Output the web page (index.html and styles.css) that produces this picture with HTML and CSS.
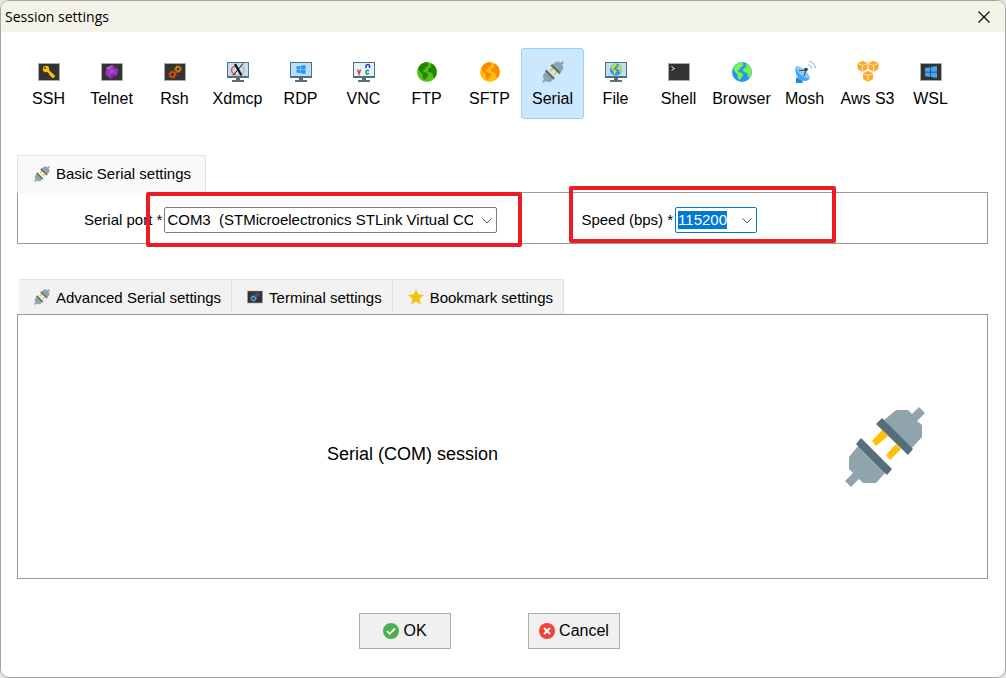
FILE: index.html
```html
<!DOCTYPE html>
<html lang="en">
<head>
    <meta charset="UTF-8">
    <meta name="viewport" content="width=device-width, initial-scale=1.0">
    <title>Session settings</title>
    <link rel="stylesheet" href="styles.css">
</head>
<body>

<!-- Shared icons -->
<svg class="sprite" aria-hidden="true">
    <symbol id="plug" viewBox="0 0 80 80">
        <path fill="#90a4ae" d="M51 3h12l4 4 7-7 6 6-8 8 5 4v12L66 42 38 14zM14 38 4 50v12l4 4-8 8 6 6 8-8 4 4h13l10-11-3-7z"/>
        <path fill="#ffc107" d="m37 23 6 6-12 10-4-5zM51 37l5 5-11 11-4-5z"/>
        <path fill="#546e7a" d="m37 11 31 31-5 6-32-31zM16 31l31 31-5 6-31-31z"/>
    </symbol>
    <symbol id="tile" viewBox="0 0 22 22">
        <path fill="#333" stroke="#adadad" d="M.5 2.500h21v17H.5z"/>
    </symbol>
    <symbol id="monitor" viewBox="0 0 22 22">
        <path fill="#546e7a" d="M0 1h22v16H0zM9 17h4v2h4v2H5v-2h4z"/>
        <path fill="#bbdefb" d="M1 2h20v13H1z"/>
    </symbol>
    <symbol id="land" viewBox="0 0 20 20">
        <path d="M2.500 4 5 1.700 8.500.3l3 .3-1 1.400 1.200 1-1.400 1.500-2 .7.4 1.600-2 1L5.500 9l2 1.300 2.600.6 1.300 2-1.600 2-1.300 2.400-1.600.5-1.300-2.700.2-2.300L4 10.800 2.300 9 1.500 6zM13.500 2.300l2.800.1 2.500 3.400L19.700 9l-.5 4-1.700 3-1.600-1.600-.2-2.600-1.700-1.300-2.300-.6-.9-2L12.300 6l2.300-.9-.8-1.300z"/>
    </symbol>
    <symbol id="windows" viewBox="0 0 12 12">
        <path d="m0 2 5-.8v4.500H0zM5.700 1.100 12 0v5.700H5.700zM0 6.400h5v4.500L0 10zM5.700 6.400H12V12l-6.300-1z"/>
    </symbol>
    <symbol id="gear" viewBox="0 0 10 10">
        <circle cx="5" cy="5" r="2.700" fill="none" stroke="currentColor" stroke-width="1.500"/>
        <circle cx="5" cy="5" r="4" fill="none" stroke="currentColor" stroke-width="1.500" stroke-dasharray="1.300 1.840"/>
    </symbol>
    <symbol id="chevron" viewBox="0 0 10 6">
        <path fill="none" stroke="#555" d="m.5.500 4.500 4.500L9.500.5"/>
    </symbol>
</svg>

<main class="window">
    <header class="titlebar">
        <h1>Session settings</h1>
        <button class="close" type="button" aria-label="Close">
            <svg viewBox="0 0 12 12"><path stroke="#111" stroke-width="1.300" d="m.5.500 11 11m0-11-11 11"/></svg>
        </button>
    </header>

    <nav class="session-types" aria-label="Session type">
        <button type="button">
            <svg viewBox="0 0 22 22"><use href="#tile"/><path fill="none" stroke="#ffc107" stroke-width="2.400" d="m9 9 7.500 7M13 13l-1.200 1.500M15 15l-1.200 1.500"/><circle cx="8" cy="8" r="3.200" fill="#ffc107"/><circle cx="7" cy="7" r="1" fill="#333"/></svg>
            <span>SSH</span>
        </button>
        <button type="button">
            <svg viewBox="0 0 22 22"><use href="#tile"/><path fill="#9c34b4" d="m11.500 4 5.500 3.500-.8 6.500L10 18l-5.500-4L5 7z"/><path fill="#c062d4" d="m11.500 4-3 4.500L5 7z"/><path fill="#b04cc4" d="m8.500 8.500 5.500.5-4.500 5z"/><path fill="#7b1fa2" d="m16.200 14-6.200 4-.5-4zM17 7.500l-3 1.500-2.500-5z"/></svg>
            <span>Telnet</span>
        </button>
        <button type="button">
            <svg viewBox="0 0 22 22"><use href="#tile"/><use href="#gear" x="4" y="9" width="9" height="9" color="#e65100"/><use href="#gear" x="10" y="4" width="8" height="8" color="#fb8c00"/></svg>
            <span>Rsh</span>
        </button>
        <button type="button">
            <svg viewBox="0 0 22 22"><use href="#monitor"/><path fill="none" stroke="#ff5722" stroke-width="1.500" d="M9 5C3 6 3 12 9 14"/><path fill="none" stroke="#ffa07a" stroke-width="1.500" d="M14 5c5 2 4 8-3 9"/><path fill="none" stroke="#111" stroke-width="2.200" d="m8 3 6.500 11.500"/><path fill="none" stroke="#111" d="M16 2.500 6 14.500"/></svg>
            <span>Xdmcp</span>
        </button>
        <button type="button">
            <svg viewBox="0 0 22 22"><use href="#monitor"/><use href="#windows" x="6" y="4" width="10" height="9" fill="#2196f3"/></svg>
            <span>RDP</span>
        </button>
        <button type="button">
            <svg viewBox="0 0 22 22"><use href="#monitor"/><path fill="#e3f2fd" d="M1 2h20v13H1z"/><path fill="none" stroke="#e53935" stroke-width="1.500" d="m4.500 8.500 1.500 4.500 1.500-4.500"/><path fill="none" stroke="#3038d8" stroke-width="1.500" d="M13 7V4.500c.5-1.500 3-1.500 3.500 0V7"/><path fill="none" stroke="#109838" stroke-width="1.500" d="M16 10c-1-1-3-1-3 1.200s2 2.300 3 1"/></svg>
            <span>VNC</span>
        </button>
        <button type="button">
            <svg viewBox="0 0 22 22"><circle cx="11" cy="11" r="10" fill="#4cc40c"/><use href="#land" x="1" y="1" width="20" height="20" fill="#258207"/></svg>
            <span>FTP</span>
        </button>
        <button type="button">
            <svg viewBox="0 0 22 22"><circle cx="11" cy="11" r="10" fill="#ffc107"/><use href="#land" x="1" y="1" width="20" height="20" fill="#ff8508"/></svg>
            <span>SFTP</span>
        </button>
        <button type="button" class="active" aria-pressed="true">
            <svg><use href="#plug"/></svg>
            <span>Serial</span>
        </button>
        <button type="button">
            <svg viewBox="0 0 22 22"><use href="#monitor"/><circle cx="11" cy="8.500" r="6" fill="#2196f3"/><use href="#land" x="5" y="2.500" width="12" height="12" fill="#cddc39"/></svg>
            <span>File</span>
        </button>
        <button type="button">
            <svg viewBox="0 0 22 22"><use href="#tile"/><path fill="none" stroke="#eee" d="m3.500 5.500 3 2-3 2"/></svg>
            <span>Shell</span>
        </button>
        <button type="button">
            <svg viewBox="0 0 22 22"><circle cx="11" cy="11" r="10" fill="#2196f3"/><use href="#land" x="1" y="1" width="20" height="20" fill="#7cf04c"/></svg>
            <span>Browser</span>
        </button>
        <button type="button">
            <svg viewBox="0 0 22 22"><path fill="#1e88e5" d="M2 22v-6l6 3 1 3z"/><path fill="#42a5f5" d="M2 5c-2 6 1 14 8 15 3 0 5-1 6-3z"/><path fill="#90caf9" d="M2 5c4-1 14 7 14 12-4 2-14-5-14-12z"/><path fill="none" stroke="#37474f" d="M5 9.500 12 9l-2 6"/><circle cx="12" cy="8.500" r="1.800" fill="#283593"/><path fill="none" stroke="#64b5f6" d="M14 4c2 0 3 1 3.500 3.500M15 .5c4 .5 6 3 6.500 6.500"/></svg>
            <span>Mosh</span>
        </button>
        <button type="button">
            <svg viewBox="0 0 22 22"><path fill="#ffa726" d="m5.500 0 5 2v6l-5 3-5-3V2zM16.500 0l5 2v6l-5 3-5-3V2zM11 10l5 2v6l-5 3-5-3v-6z"/><path fill="none" stroke="#fff3e0" stroke-width=".8" d="m.5 2.500 5 2 5-2M5.500 4.500V11M11.500 2.500l5 2 5-2M16.500 4.500V11M6 12.500l5 2 5-2M11 14.500V21"/></svg>
            <span>Aws S3</span>
        </button>
        <button type="button">
            <svg viewBox="0 0 22 22"><use href="#tile"/><use href="#windows" x="5" y="5" width="12" height="12" fill="#42a5f5"/></svg>
            <span>WSL</span>
        </button>
    </nav>

    <section class="basic">
        <div class="tabs">
            <button type="button" class="tab selected"><svg><use href="#plug"/></svg>Basic Serial settings</button>
        </div>
        <form class="pane fields">
            <div class="field port">
                <label for="port">Serial port *</label>
                <span class="combo">
                    <select id="port">
                        <option>COM3&nbsp; (STMicroelectronics STLink Virtual COM Port (COM3))</option>
                    </select>
                    <svg><use href="#chevron"/></svg>
                </span>
                <span class="highlight"></span>
            </div>
            <div class="field speed">
                <label for="speed">Speed (bps) *</label>
                <span class="combo">
                    <select id="speed">
                        <option>115200</option>
                    </select>
                    <svg><use href="#chevron"/></svg>
                </span>
                <span class="highlight"></span>
            </div>
        </form>
    </section>

    <section class="advanced">
        <div class="tabs">
            <button type="button" class="tab"><svg><use href="#plug"/></svg>Advanced Serial settings</button>
            <button type="button" class="tab">
                <svg viewBox="0 0 16 16"><path fill="#333" stroke="#aaa" stroke-width=".5" d="M.5 2h15v12H.5z"/><use href="#gear" x="3" y="6" width="7" height="7" color="#64b5f6"/><use href="#gear" x="8" y="3" width="5" height="5" color="#5c6bc0"/></svg>Terminal settings
            </button>
            <button type="button" class="tab">
                <svg viewBox="0 0 16 16"><path fill="#f4c20d" d="m8 0 2.300 5.400 5.700.5-4.300 3.800 1.300 5.800-5-3-5 3 1.300-5.800L0 5.900l5.700-.5z"/></svg>Bookmark settings
            </button>
        </div>
        <div class="pane summary">
            <p>Serial (COM) session</p>
            <svg><use href="#plug"/></svg>
        </div>
    </section>

    <footer class="actions">
        <button type="button">
            <svg viewBox="0 0 16 16"><circle cx="8" cy="8" r="8" fill="#4caf50"/><path fill="none" stroke="#fff" stroke-width="1.800" d="m4 8.200 2.700 2.600L12 5.500"/></svg>OK
        </button>
        <button type="button">
            <svg viewBox="0 0 16 16"><circle cx="8" cy="8" r="8" fill="#f44336"/><path fill="none" stroke="#fff" stroke-width="2" d="m5 5 6 6m0-6-6 6"/></svg>Cancel
        </button>
    </footer>
</main>

</body>
</html>
```
FILE: styles.css
```css
* {
    box-sizing: border-box;
}

body {
    font-family: "Liberation Sans", Arial, sans-serif;
    font-size: 15px;
    color: #000;
    background-color: #e4e4e8;
    margin: 0;
}

button, select {
    font: inherit;
    color: inherit;
}

.sprite {
    display: none;
}

.window {
    min-height: 100vh;
    background-color: #fff;
    border: 1px solid #a6a6a6;
    border-radius: 9px;
    overflow: hidden;
}

.titlebar {
    display: flex;
    align-items: center;
    justify-content: space-between;
    height: 31px;
    padding: 0 8px 0 4px;
    background-color: #f3f3e7;
}

.titlebar h1 {
    margin: 0;
    font-family: "Open Sans", "Noto Sans", sans-serif;
    font-size: 14px;
    font-weight: normal;
}

.close {
    display: flex;
    padding: 7px;
    background: none;
    border: none;
}

.close svg {
    width: 12px;
    height: 12px;
}

/* Session type toolbar */
.session-types {
    display: flex;
    padding: 16px 16px 0;
}

.session-types button {
    display: flex;
    flex-direction: column;
    align-items: center;
    gap: 6px;
    width: 63px;
    padding: 12px 0 9px;
    font-size: 16px;
    line-height: 20px;
    white-space: nowrap;
    background: none;
    border: 1px solid transparent;
    border-radius: 3px;
}

.session-types button.active {
    background-color: #cce8ff;
    border-color: #99d1ff;
}

.session-types svg {
    width: 22px;
    height: 22px;
}

/* Tabs and panes */
.basic, .advanced {
    padding: 0 17px 0 16px;
}

.basic {
    margin-top: 36px;
}

.advanced {
    margin-top: 35px;
}

.tabs {
    display: flex;
}

.tab {
    display: flex;
    align-items: center;
    gap: 6px;
    height: 35px;
    padding: 0 10px 0 15px;
    background-color: #f2f2f2;
    border: 1px solid #e2e2e2;
    border-width: 1px 1px 0 0;
}

.tab svg {
    width: 16px;
    height: 16px;
}

.tab.selected {
    position: relative;
    height: 38px;
    margin-bottom: -1px;
    padding: 0 14px 2px 16px;
    background-color: #f9f9f9;
    border-width: 1px 1px 0 1px;
}

.advanced .tabs {
    padding-left: 2px;
}

.pane {
    border: 1px solid #999;
}

.fields {
    display: flex;
    gap: 84px;
    padding: 14px 66px 10px;
}

.field {
    position: relative;
    display: flex;
    align-items: center;
    gap: 2px;
}

.field label {
    padding-bottom: 2px;
}

.combo {
    position: relative;
    display: flex;
}

.combo svg {
    position: absolute;
    top: 11px;
    right: 5px;
    width: 10px;
    height: 6px;
    pointer-events: none;
}

select {
    appearance: none;
    height: 26px;
    padding: 0 23px 2px 2px;
    background-color: #fff;
    border: 1px solid #7a7a7a;
    border-radius: 2px;
}

.port select {
    width: 333px;
}

.speed select {
    width: 82px;
    color: #fff;
    background: #fff linear-gradient(#0078d7, #0078d7) 2px 3px / 49px 18px no-repeat;
    border-color: #0078d7;
}

/* Red frames around the fields to fill in */
.highlight {
    position: absolute;
    border: 4px solid #ed1c24;
    border-radius: 2px;
    pointer-events: none;
}

.port .highlight {
    inset: -15px -25px -14px 62px;
}

.speed .highlight {
    inset: -21px -79px -10px -12px;
}

.summary {
    display: grid;
    grid-template-columns: 1fr 180px;
    align-items: center;
    padding: 92px 0 91px;
}

.summary p {
    margin: 0;
    padding-top: 14px;
    font-size: 18px;
    text-align: center;
}

.summary svg {
    width: 80px;
    height: 80px;
    margin-left: 38px;
}

/* Bottom buttons */
.actions {
    display: flex;
    justify-content: center;
    gap: 77px;
    padding: 34px 27px 28px 0;
}

.actions button {
    display: flex;
    align-items: center;
    justify-content: center;
    gap: 4px;
    width: 92px;
    height: 36px;
    padding: 0;
    font-size: 16px;
    background-color: #f0f0f0;
    border: 1px solid #adadad;
}

.actions svg {
    width: 16px;
    height: 16px;
}
```
